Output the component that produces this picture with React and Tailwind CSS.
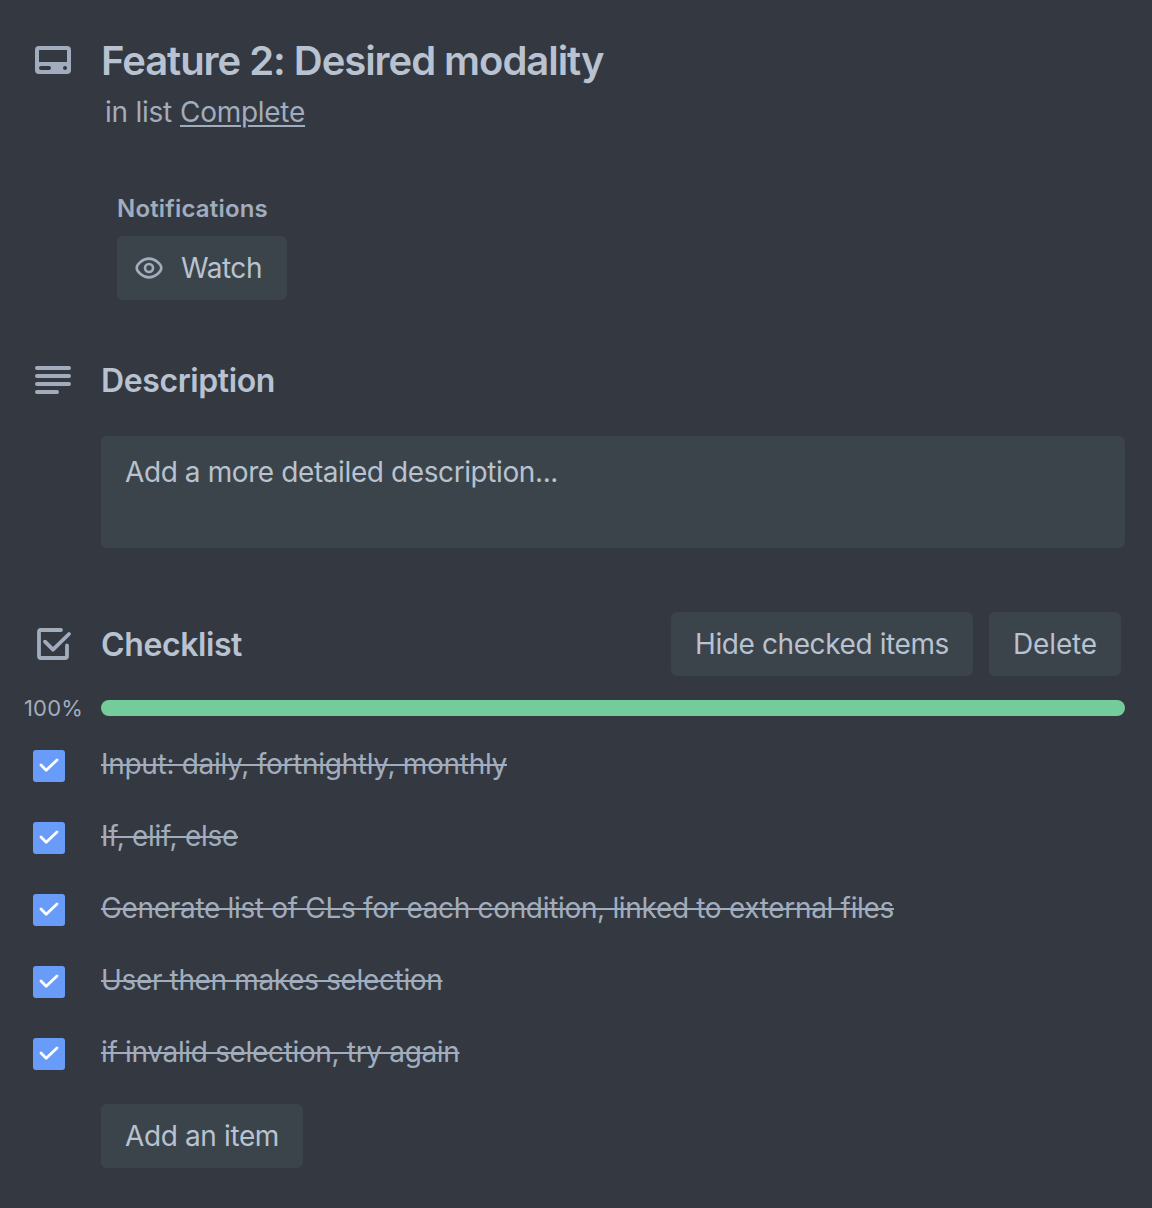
import React from "react";

const items = [
  { text: "Input: daily, fortnightly, monthly", width: 406 },
  { text: "If, elif, else", width: 137 },
  { text: "Generate list of CLs for each condition, linked to external files", width: 793 },
  { text: "User then makes selection", width: 341.5 },
  { text: "if invalid selection, try again", width: 358.5 },
];

function Label({ text, width, className = "" }) {
  const ref = React.useRef(null);
  React.useLayoutEffect(() => {
    const el = ref.current;
    el.style.letterSpacing = "0px";
    const natural = el.getBoundingClientRect().width;
    el.style.letterSpacing = (width - natural) / text.length + "px";
  }, [text, width]);
  return <span ref={ref} className={"inline-block whitespace-pre " + className}>{text}</span>;
}

function CardIcon() {
  return (
    <svg className="h-9 w-9" viewBox="0 0 36 36">
      <path fillRule="evenodd" fill="#a1adbd" d="M4 4h28a4 4 0 0 1 4 4v20a4 4 0 0 1-4 4H4a4 4 0 0 1-4-4V8a4 4 0 0 1 4-4Zm0 4v12h28V8H4Zm2 16a2 2 0 0 0 0 4h8a2 2 0 0 0 0-4H6Zm24 0a2 2 0 0 0 0 4 2 2 0 0 0 0-4Z" />
    </svg>
  );
}

function Row({ icon, children, className = "" }) {
  return (
    <div className={"flex items-center " + className}>
      <div className="flex w-[101px] shrink-0 pl-[35px]">{icon}</div>
      {children}
    </div>
  );
}

export default function App() {
  return (
    <main className="h-[1208px] w-[1152px] overflow-hidden bg-[#343840] pt-[36px] font-[Inter,sans-serif] text-[28px] leading-[40px] text-[#a1adbd]">
      <Row icon={<CardIcon />} className="h-12">
        <h1 className="pt-[2px] text-[40px] leading-[48px] font-semibold text-[#b8c2d0]"><Label text="Feature 2: Desired modality" width={502.5} /></h1>
      </Row>
      <p className="mt-2 flex gap-2 pl-[105px]">
        <Label text="in list" width={67} />
        <Label text="Complete" width={125} className="underline decoration-2 underline-offset-[3px]" />
      </p>
      <h3 className="mt-[61px] pl-[117px] text-[24px] leading-[32px] font-semibold"><Label text="Notifications" width={151} /></h3>
      <button className="mt-[11px] ml-[117px] flex h-16 w-[170px] items-center rounded-[6px] bg-[#3c444b] pl-[18px] text-[#b8c2d0]">
        <svg className="mr-[18px] h-7 w-7" viewBox="0 0 28 28" fill="none" stroke="#a1adbd" strokeWidth="2.6">
          <path d="M1.700 14C1.700 10.500 7.500 4.600 14 4.600S26.300 10.500 26.300 14S20.500 23.400 14 23.400S1.700 17.500 1.700 14Z" /><circle cx="14" cy="14" r="4" />
        </svg>
        <Label text="Watch" width={81} />
      </button>
      <Row className="mt-[60px] h-10" icon={<svg className="h-9 w-9" viewBox="0 0 36 36" stroke="#a1adbd" strokeWidth="4" strokeLinecap="round"><path d="M2 6h32M2 14h32M2 22h32M2 30h20" /></svg>}>
        <h2 className="pt-[2px] text-[32px] font-semibold text-[#b8c2d0]"><Label text="Description" width={174} /></h2>
      </Row>
      <div className="mt-9 ml-[101px] h-28 w-[1024px] rounded-[6px] bg-[#3c444b] px-6 py-4 text-[#b8c2d0]">
        <Label text="Add a more detailed description..." width={433} />
      </div>
      <Row className="mt-16 h-16" icon={<svg className="h-9 w-9 overflow-visible" viewBox="0 0 36 36" fill="none" stroke="#a1adbd" strokeWidth="3.8" strokeLinecap="round" strokeLinejoin="round"><path d="M26 4H6a2 2 0 0 0-2 2v24a2 2 0 0 0 2 2h24a2 2 0 0 0 2-2V19.500M10 15.700l8 8L34 8" /></svg>}>
        <h2 className="pt-[2px] text-[32px] font-semibold text-[#b8c2d0]"><Label text="Checklist" width={141} /></h2>
        <button className="mr-4 ml-auto h-16 w-[302px] rounded-[6px] bg-[#3c444b] pl-6 text-left text-[#b8c2d0]"><Label text="Hide checked items" width={254} /></button>
        <button className="mr-[31px] h-16 w-[132px] rounded-[6px] bg-[#3c444b] pl-6 text-left text-[#b8c2d0]"><Label text="Delete" width={84} /></button>
      </Row>
      <div className="mt-4 flex h-8 items-center">
        <span className="w-[77px] shrink-0 pl-6 text-[22px]"><Label text="100%" width={59} /></span>
        <div className="ml-6 h-4 w-[1024px] rounded-full bg-[#74cc9b]" />
      </div>
      <ul className="mt-2">
        {items.map((item) => (
          <li key={item.text} className="flex h-[72px] pt-3">
            <span className="mt-[6px] mr-9 ml-[33px] h-8 w-8 rounded-[3px] bg-[#699cf9]">
              <svg viewBox="0 0 32 32" fill="none" stroke="white" strokeWidth="2.8" strokeLinecap="round" strokeLinejoin="round"><path d="m8 15 5.200 5.200L24 10" /></svg>
            </span>
            <Label text={item.text} width={item.width} className="line-through decoration-2" />
          </li>
        ))}
      </ul>
      <button className="mt-3 ml-[101px] h-16 w-[202px] rounded-[6px] bg-[#3c444b] pl-6 text-left text-[#b8c2d0]"><Label text="Add an item" width={154} /></button>
    </main>
  );
}
